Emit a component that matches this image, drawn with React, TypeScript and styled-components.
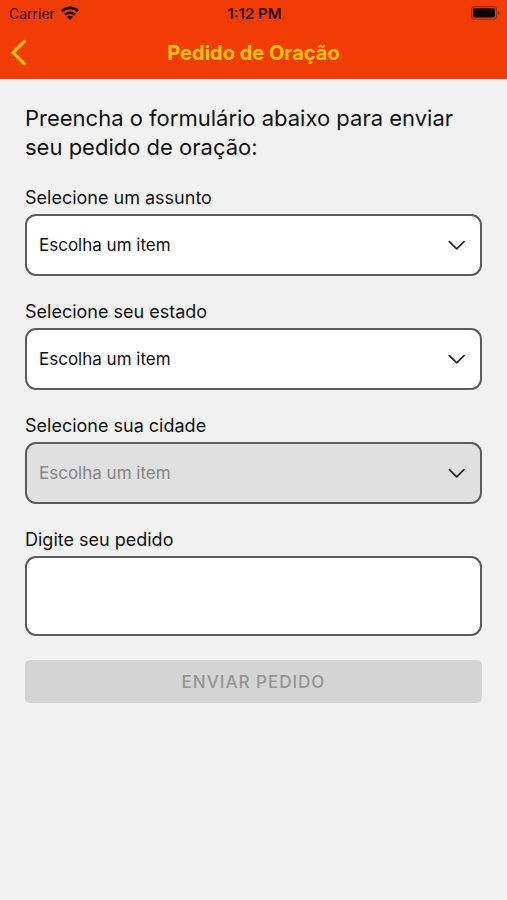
import React, { useState } from 'react';
import styled, { createGlobalStyle } from 'styled-components';

const GlobalStyle = createGlobalStyle`
  *, *::before, *::after { box-sizing: border-box; }
  body {
    margin: 0;
    background: #f1f1f1;
    color: #111;
    font-family: Inter, "Liberation Sans", sans-serif;
  }
  button, input, select, textarea { font: inherit; color: inherit; }
`;

const Header = styled.header`
  background: #f13c04;
`;

const StatusBar = styled.div`
  display: grid;
  grid-template-columns: 1fr auto 1fr;
  align-items: center;
  height: 26px;
  padding: 0 7px 0 9px;
  font-size: 14px;
  color: #2a0a00;
`;

const Carrier = styled.span`
  display: flex;
  align-items: center;
  gap: 6px;
`;

const Clock = styled.time`
  font-size: 15px;
  font-weight: 600;
`;

const BatteryIcon = styled.svg`
  justify-self: end;
`;

const NavBar = styled.nav`
  display: grid;
  grid-template-columns: 44px 1fr 44px;
  align-items: center;
  height: 53px;
`;

const BackButton = styled.button`
  display: flex;
  align-items: center;
  height: 44px;
  padding: 0 0 0 10px;
  border: 0;
  background: none;
  cursor: pointer;
`;

const Title = styled.h1`
  margin: 0;
  text-align: center;
  font-size: 20px;
  line-height: 24px;
  font-weight: 700;
  color: #ffc400;
`;

const Form = styled.form`
  display: flex;
  flex-direction: column;
  gap: 24px;
  padding: 25px 25px 24px;
`;

const Intro = styled.p`
  margin: 0;
  font-size: 22px;
  line-height: 29px;
`;

const Field = styled.div`
  display: flex;
  flex-direction: column;
  gap: 4px;
`;

const Label = styled.label`
  font-size: 18px;
  line-height: 24px;
`;

const SelectBox = styled.div`
  display: grid;
  align-items: center;
  > * { grid-area: 1 / 1; }
`;

const Select = styled.select`
  appearance: none;
  width: 100%;
  height: 62px;
  padding: 0 48px 0 12px;
  border: 2px solid #5c5c5c;
  border-radius: 11px;
  background: #fff;
  font-size: 17px;
  opacity: 1;
  &:disabled { background: #e0e0e0; color: #858585; }
`;

const Chevron = styled.svg`
  justify-self: end;
  margin-right: 17px;
  pointer-events: none;
`;

const TextArea = styled.textarea`
  display: block;
  width: 100%;
  height: 80px;
  padding: 12px;
  border: 2px solid #5c5c5c;
  border-radius: 11px;
  background: #fff;
  font-size: 17px;
  resize: none;
`;

const SubmitButton = styled.button`
  height: 43px;
  border: 0;
  border-radius: 5px;
  background: #d4d4d4;
  color: #949494;
  font-size: 17px;
  font-weight: 500;
  letter-spacing: 1px;
  text-transform: uppercase;
`;

function SelectField({ id, label, disabled }: { id: string; label: string; disabled?: boolean }) {
  return (
    <Field>
      <Label htmlFor={id}>{label}</Label>
      <SelectBox>
        <Select id={id} disabled={disabled}>
          <option>Escolha um item</option>
        </Select>
        <Chevron width="17" height="10" viewBox="0 0 17 10" fill="none" stroke="#2c2c2c" strokeWidth="1.8" strokeLinecap="round" strokeLinejoin="round" aria-hidden="true">
          <path d="M1.4 1.7 8.7 8.8l7.3-7.1" />
        </Chevron>
      </SelectBox>
    </Field>
  );
}

export default function App() {
  const [message, setMessage] = useState('');
  return (
    <>
      <GlobalStyle />
      <Header>
        <StatusBar>
          <Carrier>
            Carrier
            <svg width="18" height="14" viewBox="0 0 18 14" fill="none" stroke="#1c0a04" strokeWidth="2.6" aria-hidden="true">
              <path d="M.9 5.2a11.6 11.6 0 0 1 16.2 0" />
              <path d="M4 8.7a7.2 7.2 0 0 1 10 0" />
              <path d="M9 14 6.1 11a4 4 0 0 1 5.8 0Z" fill="#1c0a04" stroke="none" />
            </svg>
          </Carrier>
          <Clock>1:12 PM</Clock>
          <BatteryIcon width="29" height="14" viewBox="0 0 29 14" aria-hidden="true">
            <rect x=".6" y=".6" width="25" height="12.6" rx="3.4" fill="none" stroke="#a62c08" strokeWidth="1.2" />
            <rect x="2" y="2.2" width="22" height="9.4" rx="1.8" fill="#0c0200" />
            <path d="M27 4.6a2.5 2.5 0 0 1 0 4.6Z" fill="#a62c08" />
          </BatteryIcon>
        </StatusBar>
        <NavBar>
          <BackButton type="button" aria-label="Voltar">
            <svg width="17" height="28" viewBox="0 0 17 28" fill="none" stroke="#ffc400" strokeWidth="3.2" strokeLinecap="round" aria-hidden="true">
              <path d="M14.4 2.4 3 13.6l11.4 11.2" />
            </svg>
          </BackButton>
          <Title>Pedido de Oração</Title>
        </NavBar>
      </Header>
      <Form onSubmit={(event: React.FormEvent) => event.preventDefault()}>
        <Intro>Preencha o formulário abaixo para enviar seu pedido de oração:</Intro>
        <SelectField id="assunto" label="Selecione um assunto" />
        <SelectField id="estado" label="Selecione seu estado" />
        <SelectField id="cidade" label="Selecione sua cidade" disabled />
        <Field>
          <Label htmlFor="pedido">Digite seu pedido</Label>
          <TextArea id="pedido" value={message} onChange={(event) => setMessage(event.target.value)} />
        </Field>
        <SubmitButton type="submit" disabled>Enviar pedido</SubmitButton>
      </Form>
    </>
  );
}
